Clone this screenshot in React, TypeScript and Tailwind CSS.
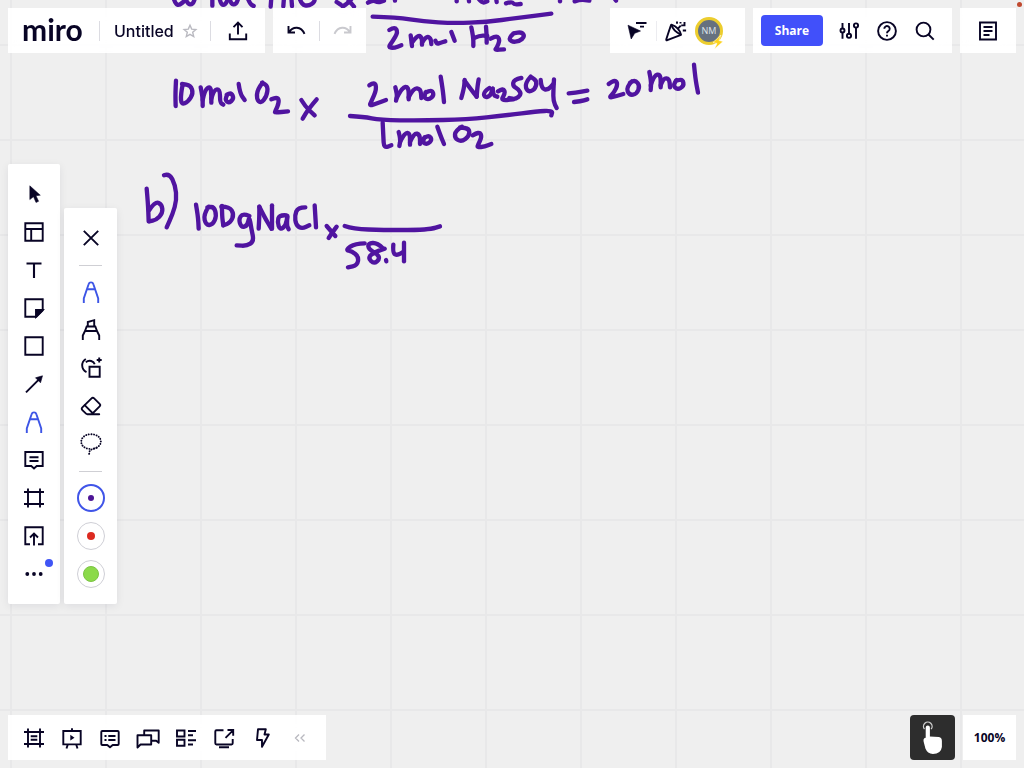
import React from 'react';
import { Eraser } from 'lucide-react';

const INK = '#5014a0';

interface InkGroup {
  x: number;
  y: number;
  strokes: number[][];
}

// Pen strokes as flat x,y lists, in board units (3 units = 1 px at 100% zoom)
const INK_GROUPS: InkGroup[] = [
  {
    x: 480,
    y: 0,
    strokes: [
      // first row, cut by the top edge
      [40, -8, 46, 12, 58, 16, 74, 2],
      [74, -10, 82, 12, 98, 14, 106, -8],
      [157, -8, 157, 17],
      [178, -8, 182, 14, 196, 15, 206, -8],
      [208, -8, 212, 12, 228, 14, 236, -8],
      [262, -8, 270, 12, 281, 18],
      [334, -8, 332, 20],
      [372, -8, 370, 19],
      [394, -8, 396, 18],
      [418, -8, 424, 14, 446, 18, 464, 6, 464, -8],
      [530, 6, 542, 14],
      [548, 20, 566, 8, 578, -8],
      [566, 2, 574, 10, 582, 20],
      // 10 mol O2 x
      [48, 242, 46, 280, 47, 318],
      [68, 254, 62, 284, 64, 314, 84, 306, 100, 280, 92, 256, 66, 252],
      [122, 262, 128, 290, 128, 318],
      [128, 300, 134, 270, 152, 258, 154, 288, 154, 308],
      [154, 296, 162, 268, 180, 268, 180, 308, 190, 314],
      [202, 284, 194, 298, 206, 310, 222, 296, 214, 278, 200, 284],
      [236, 252, 240, 280, 254, 300],
      [308, 248, 292, 268, 290, 298, 302, 310, 320, 290, 324, 258, 306, 248],
      [334, 298, 352, 290, 358, 306, 346, 334, 344, 338, 384, 334],
      [424, 300, 436, 320, 464, 346],
      [470, 298, 446, 326, 428, 356],
    ],
  },
  {
    x: 1020,
    y: 0,
    strokes: [
      // first row, cut by the top edge
      [84, 8, 98, 0, 114, 8, 132, 2],
      [164, -8, 165, 2],
      [350, -8, 350, 4],
      [386, -8, 387, 4],
      [414, -6, 426, 10, 442, 4],
      [468, -8, 470, 6],
      [498, 10, 516, 4, 522, 14, 542, 12],
      [660, -8, 660, 4],
      [704, 4, 722, -2, 748, 2],
      [824, -4, 828, 2],
      // bar and 2 mol H2O
      [98, 50, 170, 52, 250, 64, 340, 70, 440, 66, 530, 54, 634, 41],
      [148, 90, 164, 80, 174, 96, 158, 124, 144, 142, 162, 144, 184, 136],
      [212, 106, 216, 138],
      [216, 128, 232, 104, 246, 112, 246, 134],
      [246, 128, 258, 108, 272, 114, 274, 132],
      [286, 122, 290, 132, 302, 128, 316, 124],
      [334, 96, 344, 122],
      [394, 82, 400, 110, 400, 138],
      [438, 80, 440, 104, 440, 128],
      [402, 114, 420, 106, 442, 108],
      [452, 116, 470, 106, 480, 120, 470, 144, 464, 150, 492, 148],
      [522, 100, 506, 112, 514, 126, 538, 124, 554, 110, 546, 96, 520, 100],
      // 2 mol Na2SO4
      [88, 256, 104, 244, 110, 268, 94, 304, 88, 318, 110, 310, 138, 300],
      [166, 262, 172, 284, 168, 302],
      [170, 294, 186, 262, 206, 260, 206, 298],
      [206, 292, 220, 264, 242, 266, 244, 294],
      [258, 276, 250, 292, 266, 300, 282, 286, 276, 270, 256, 278],
      [302, 230, 308, 266, 312, 306],
      [364, 294, 372, 266, 374, 240],
      [374, 242, 390, 264, 410, 290],
      [410, 290, 412, 262, 416, 238],
      [448, 264, 432, 274, 432, 292, 450, 290, 458, 266],
      [458, 266, 460, 286, 472, 290],
      [474, 274, 490, 264, 496, 280, 482, 302, 520, 298],
      [544, 234, 522, 238, 518, 258, 536, 268, 544, 284, 526, 298, 508, 294],
      [572, 230, 554, 250, 562, 276, 584, 270, 592, 244, 572, 230],
      [602, 240, 604, 266, 624, 270, 640, 252],
      [642, 238, 640, 270, 640, 304, 650, 324],
      // bar and 1 mol O2
      [30, 348, 70, 350, 120, 360, 240, 362, 380, 358, 500, 346, 590, 334, 638, 332, 634, 346],
      [128, 368, 130, 410, 132, 444, 154, 436],
      [176, 396, 182, 418, 178, 438],
      [180, 426, 194, 398, 210, 400, 210, 434],
      [210, 426, 222, 398, 240, 404, 240, 432],
      [254, 412, 246, 426, 262, 434, 276, 420, 268, 406, 252, 414],
      [292, 380, 302, 408, 312, 432],
      [366, 380, 346, 392, 344, 414, 364, 426, 388, 408, 388, 386, 360, 382],
      [398, 406, 418, 394, 426, 410, 414, 434, 412, 442, 434, 440, 454, 432],
      // = 20 mol
      [686, 280, 708, 278, 742, 272],
      [702, 306, 722, 304, 742, 298],
      [806, 252, 824, 238, 834, 252, 822, 278, 806, 294, 830, 288, 850, 282],
      [876, 244, 858, 262, 868, 286, 890, 282, 900, 258, 886, 240, 870, 248],
      [928, 216, 934, 244, 932, 270],
      [932, 256, 942, 226, 962, 222, 962, 262],
      [962, 256, 970, 234, 988, 236, 990, 262],
      [1010, 240, 998, 254, 1012, 270, 1032, 258, 1028, 238, 1008, 242],
      [1062, 194, 1066, 236, 1074, 278],
    ],
  },
  {
    x: 390,
    y: 480,
    strokes: [
      // b)
      [50, 86, 54, 130, 56, 184],
      [58, 150, 76, 124, 96, 134, 98, 160, 78, 180, 58, 184],
      [102, 46, 118, 40, 136, 76, 140, 120, 128, 162, 110, 202],
      // 100 g NaCl
      [198, 134, 204, 168, 206, 206],
      [236, 140, 220, 164, 228, 196, 248, 194, 260, 168, 252, 140, 232, 142],
      [276, 138, 276, 168, 280, 196],
      [274, 140, 298, 140, 312, 162, 302, 188, 280, 196],
      [358, 168, 338, 160, 326, 178, 334, 202, 352, 198, 358, 168, 364, 206, 372, 244, 350, 258, 320, 256],
      [386, 206, 388, 174, 388, 140],
      [388, 140, 404, 172, 424, 206],
      [426, 206, 426, 170, 426, 136],
      [470, 166, 448, 164, 442, 186, 450, 210, 468, 196, 472, 168],
      [472, 170, 470, 196, 476, 208],
      [526, 142, 504, 142, 494, 166, 498, 196, 516, 206, 538, 196],
      [554, 136, 556, 168, 558, 202],
      // x, bar, 58.4
      [590, 198, 602, 212, 616, 228],
      [620, 200, 608, 216, 596, 234],
      [644, 198, 670, 207, 760, 210, 860, 210, 905, 207, 930, 199],
      [704, 250, 676, 250, 646, 270, 666, 274, 686, 290, 682, 316, 654, 322],
      [760, 266, 742, 248, 714, 250, 716, 268, 740, 280, 750, 296, 732, 312, 714, 294, 730, 278, 764, 266],
      [768, 300, 769, 304],
      [790, 254, 788, 280, 802, 286, 820, 276],
      [822, 248, 822, 276, 822, 304],
    ],
  },
];

// Smooths a stroke by running quadratic curves through the segment midpoints
function strokePath(pts: number[]) {
  let d = `M${pts[0]} ${pts[1]}`;
  for (let i = 2; i < pts.length - 2; i += 2) {
    const mx = (pts[i] + pts[i + 2]) / 2;
    const my = (pts[i + 1] + pts[i + 3]) / 2;
    d += `Q${pts[i]} ${pts[i + 1]} ${mx} ${my}`;
  }
  return `${d}L${pts[pts.length - 2]} ${pts[pts.length - 1]}`;
}

function Board() {
  return (
    <div className="absolute inset-0 overflow-hidden" role="img" aria-label="Whiteboard canvas">
      <svg className="absolute inset-0 w-full h-full">
        <defs>
          <pattern id="grid" x="10" y="44" width="95" height="95" patternUnits="userSpaceOnUse">
            <path d="M0 1H95M1 0V95" stroke="#e8e8e9" strokeWidth="2" fill="none" />
          </pattern>
        </defs>
        <rect width="100%" height="100%" fill="url(#grid)" />
      </svg>
      <svg className="absolute top-0 left-0 max-w-none" width="1024" height="768" viewBox="0 0 3072 2304">
        {INK_GROUPS.map((group, i) => (
          <g
            key={i}
            transform={`translate(${group.x} ${group.y})`}
            fill="none"
            stroke={INK}
            strokeWidth="13"
            strokeLinecap="round"
            strokeLinejoin="round"
          >
            {group.strokes.map((pts, j) => (
              <path key={j} d={strokePath(pts)} />
            ))}
          </g>
        ))}
      </svg>
    </div>
  );
}

interface IconProps {
  children: React.ReactNode;
  width?: string;
}

function Icon({ children, width = '1.9' }: IconProps) {
  return (
    <svg
      className="w-6 h-6 shrink-0 overflow-visible"
      viewBox="0 0 24 24"
      fill="none"
      stroke="currentColor"
      strokeWidth={width}
      aria-hidden="true"
    >
      {children}
    </svg>
  );
}

interface ToolProps {
  label: string;
  children: React.ReactNode;
  className?: string;
}

function Tool({ label, children, className = '' }: ToolProps) {
  return (
    <button
      type="button"
      aria-label={label}
      className={`relative flex items-center justify-center w-[38px] h-[38px] shrink-0 cursor-pointer ${className}`}
    >
      {children}
    </button>
  );
}

function PenIcon() {
  return (
    <Icon>
      <path d="M4.800 23v-4.500L9.600 4.200a2.500 2.500 0 0 1 4.800 0L19.200 18.500V23M8.400 9.200h7.200" />
    </Icon>
  );
}

function Divider() {
  return <span className="w-px h-5 shrink-0 bg-[#dcdce2]" />;
}

function TopBar() {
  return (
    <header className="relative flex gap-2 p-2">
      <div className="flex items-center h-[45px] pl-[14px] pr-2 bg-white/95 backdrop-blur-sm">
        <a href="#" className="w-[77px] text-[30px] leading-8 font-bold font-['Lato',sans-serif] pb-1">
          miro
        </a>
        <Divider />
        <button type="button" className="ml-[14px] text-base font-medium font-['Inter',sans-serif] cursor-pointer">
          Untitled
        </button>
        <button type="button" aria-label="Add to favourites" className="ml-2 mr-3 text-[#b9b9c0] cursor-pointer">
          <svg className="w-4 h-4" viewBox="0 0 16 16" fill="none" stroke="currentColor" strokeWidth="1.4">
            <path d="M8 2.200l1.700 3.900 4.200.400-3.200 2.800 1 4.200L8 11.300l-3.700 2.200 1-4.200-3.200-2.800 4.200-.400z" />
          </svg>
        </button>
        <Divider />
        <Tool label="Export" className="ml-2">
          <Icon>
            <path d="M3.800 14.500v5.700h16.400v-5.700M12 15.500V4M7.500 8.200 12 3.700l4.500 4.500" />
          </Icon>
        </Tool>
      </div>

      <div className="flex items-center h-[45px] px-1 bg-white/95 backdrop-blur-sm">
        <Tool label="Undo">
          <Icon>
            <path d="M4.500 7v6.500H11M5 13.300c4-6.300 12-6.300 15.500 1.500" />
          </Icon>
        </Tool>
        <span className="px-1">
          <span className="block w-px h-5 bg-[#dcdce2]" />
        </span>
        <Tool label="Redo" className="text-[#c9c9ce]">
          <Icon>
            <path d="M19.500 7v6.500H13M19 13.300C15 7 7 7 3.500 14.800" />
          </Icon>
        </Tool>
      </div>

      <div className="flex items-center h-[45px] w-[135px] ml-auto pl-2 bg-white/95 backdrop-blur-sm">
        <Tool label="Hide cursors">
          <Icon>
            <path d="M3 6.200 15.500 12l-5.800 2.300L6.200 20z" fill="currentColor" strokeWidth="0.6" />
            <path d="M11 4h10.500M15 7.600h4" />
          </Icon>
        </Tool>
        <span className="w-px h-5 bg-[#ececf0]" />
        <Tool label="Reactions">
          <Icon>
            <path d="M7.300 5.600Q6.200 8 2.300 20.300q-.3 1.400 1 .900L17 15.800Q15.500 8.500 7.300 5.600z" strokeLinejoin="round" />
            <path d="M7.300 5.600Q9 12 17 15.800M14 9.600l2.700-2.900M17.200 6.400h3.300V3M13 2.500v2.300M18.800 11.500h3.300M16.500 3v1.500" />
          </Icon>
        </Tool>
        <button
          type="button"
          aria-label="Profile"
          className="relative flex items-center justify-center w-7 h-7 border-3 border-[#eccd2e] rounded-full bg-[#66717f] text-[#dfe5ea] text-[9px] font-['Open_Sans',sans-serif] cursor-pointer"
        >
          NM
          <svg className="absolute -right-1 -bottom-2 w-3 h-4" viewBox="0 0 12 16">
            <path d="M9 1 1 8.500l4 1L2.500 15 11 7.500 7 6.500z" fill="#fcd21f" stroke="#fff" strokeWidth="0.5" />
          </svg>
        </button>
      </div>

      <div className="flex items-center h-[45px] px-2 bg-white/95 backdrop-blur-sm">
        <button
          type="button"
          className="w-[62px] h-[31px] mr-[7px] rounded bg-[#4150fa] text-white text-[12px] font-bold font-['Open_Sans',sans-serif] cursor-pointer"
        >
          Share
        </button>
        <Tool label="Settings">
          <Icon>
            <path d="M5.500 4v5.500M5.500 13.500v6.200M12 4v10.700M19 9v10.700" />
            <circle cx="5.500" cy="11.500" r="2" />
            <circle cx="12" cy="16.800" r="2.100" />
            <circle cx="19" cy="6.500" r="2.100" />
          </Icon>
        </Tool>
        <Tool label="Help">
          <Icon>
            <circle cx="12" cy="12" r="8.900" />
            <path d="M9.300 9.800a2.700 2.700 0 1 1 4.200 2.200c-1 .7-1.500 1-1.500 2.200M12 15.700v1.900" />
          </Icon>
        </Tool>
        <Tool label="Search">
          <Icon>
            <circle cx="10.500" cy="10.500" r="6.900" />
            <path d="m15.500 15.500 5.200 5.200" />
          </Icon>
        </Tool>
      </div>

      <div className="flex items-center h-[45px] px-[9px] bg-white/95 backdrop-blur-sm">
        <Tool label="Notes">
          <Icon>
            <path d="M4 3.500h16v17H4zM7.500 8h9M7.500 12h9M7.500 16h6" />
          </Icon>
        </Tool>
      </div>
      <span className="absolute top-0.5 right-0.5 w-[5px] h-[5px] rounded-full bg-[#c0492f]" />
    </header>
  );
}

const PEN_COLORS = [
  { name: 'Purple pen', ring: 'border-2 border-[#4055e8]', dot: 'w-1.5 h-1.5 bg-[#4d1596]' },
  { name: 'Red pen', ring: 'border border-[#cfcfd6]', dot: 'w-2 h-2 bg-[#dc2a20]' },
  { name: 'Green pen', ring: 'border border-[#cfcfd6]', dot: 'w-4 h-4 border border-[#7cc444] bg-[#8bda4a]' },
];

function SideBars() {
  return (
    <main className="relative flex flex-1 items-center px-2">
      <div className="flex items-end gap-1">
        <nav
          aria-label="Tools"
          className="flex flex-col items-center w-[52px] py-[11px] bg-white/98 rounded-xs shadow-[0_2px_8px_rgba(5,0,56,0.08)]"
        >
          <Tool label="Select">
            <Icon>
              <path
                d="M7.800 3.800 18.300 13.200l-4.300.500 2.600 5.600-2.600 1.200-2.500-5.700-3.700 2.800z"
                fill="currentColor"
                strokeWidth="0.5"
              />
            </Icon>
          </Tool>
          <Tool label="Templates">
            <Icon>
              <path d="M3.300 3.300h17.400v17.400H3.300zM3.300 9h17.400M9.200 9v11.700" />
            </Icon>
          </Tool>
          <Tool label="Text">
            <Icon width="2.100">
              <path d="M4.500 5.500h15M12 5.500V20" />
            </Icon>
          </Tool>
          <Tool label="Sticky note">
            <Icon>
              <path d="M3.300 3.300h17.400v11L14.300 20.700h-11z" />
              <path d="M20.700 14h-6.700v6.700z" fill="currentColor" />
            </Icon>
          </Tool>
          <Tool label="Shapes">
            <Icon>
              <path d="M3.300 3.300h17.400v17.400H3.300z" />
            </Icon>
          </Tool>
          <Tool label="Connection line">
            <Icon>
              <path d="M4 20.300 17.500 6.800" />
              <path d="m20.500 3.800-2 7L13.500 5.800z" fill="currentColor" strokeWidth="0.6" />
            </Icon>
          </Tool>
          <Tool label="Pen" className="text-[#3d55e6]">
            <PenIcon />
          </Tool>
          <Tool label="Comment">
            <Icon>
              <path d="M3.300 4h17.400v14h-6l-2.700 2.400L9.300 18h-6zM7.500 9.200h9M7.500 13h9" />
            </Icon>
          </Tool>
          <Tool label="Frame">
            <Icon>
              <path d="M6 2.500v19M18 2.500v19M2 6h20M2 18h20" />
            </Icon>
          </Tool>
          <Tool label="Upload">
            <Icon>
              <path d="M8 20.200H3.300V3.300h17.400v16.900H16M12 21.500V10M8 13.500l4-4 4 4" />
            </Icon>
          </Tool>
          <Tool label="More">
            <Icon>
              <g fill="currentColor" stroke="none">
                <circle cx="5.300" cy="12" r="1.900" />
                <circle cx="12" cy="12" r="1.900" />
                <circle cx="18.700" cy="12" r="1.900" />
              </g>
            </Icon>
            <span className="absolute top-1 right-0 w-2 h-2 rounded-full bg-[#4055f5]" />
          </Tool>
        </nav>

        <div className="flex flex-col items-center w-[53px] py-[11px] bg-white/98 rounded-xs shadow-[0_2px_8px_rgba(5,0,56,0.08)]">
          <Tool label="Close">
            <Icon>
              <path d="m4.800 4.800 14.400 14.400M19.200 4.800 4.800 19.200" />
            </Icon>
          </Tool>
          <span className="flex items-center h-4">
            <span className="w-[23px] h-px bg-[#cfcfd4]" />
          </span>
          <Tool label="Pen" className="text-[#3d55e6]">
            <PenIcon />
          </Tool>
          <Tool label="Highlighter">
            <Icon>
              <path d="M3.800 22v-4.500L6 13h12l2.200 4.500V22M6 13l1.700-4.500h8.600L18 13M8.800 8.500V4l6.400-1.800v6.300" />
            </Icon>
          </Tool>
          <Tool label="Smart drawing">
            <Icon>
              <path d="M10.500 10.800h10.200v9.900H10.500z" />
              <path d="M6.800 3A7.500 7.500 0 0 0 7.500 16.200M6.800 6.200c3.500-2.800 8-1 8.900 2M20.200 1.500v5M17.700 4h5" />
            </Icon>
          </Tool>
          <Tool label="Eraser">
            <Eraser className="w-[22px] h-[22px]" strokeWidth={2} aria-hidden="true" />
          </Tool>
          <Tool label="Lasso">
            <Icon>
              <g strokeDasharray="0.1 2.500" strokeLinecap="round">
                <path d="M10.500 16.900C-1 16-.5 2.500 12 2.200 24.500 2.500 25 15 14 16.800" />
                <path d="M17.500 15.800c-4 1.200-7 2-7 4.200 0 1.200-.3 1.800-1 2.800" />
              </g>
            </Icon>
          </Tool>
          <span className="flex items-center h-4">
            <span className="w-[23px] h-px bg-[#cfcfd4]" />
          </span>
          {PEN_COLORS.map((color, i) => (
            <label key={color.name} className="flex items-center justify-center w-[38px] h-[38px] cursor-pointer">
              <input type="radio" name="pen-color" defaultChecked={i === 0} aria-label={color.name} className="sr-only" />
              <span className={`flex items-center justify-center w-7 h-7 rounded-full ${color.ring}`}>
                <span className={`rounded-full ${color.dot}`} />
              </span>
            </label>
          ))}
        </div>
      </div>
    </main>
  );
}

function BottomBar() {
  return (
    <footer className="relative flex gap-2 p-2">
      <div className="flex items-center h-[45px] px-[7px] bg-white/95 backdrop-blur-sm">
        <Tool label="Frames">
          <Icon>
            <path d="M6 2.500v19M18 2.500v19M2 6h20M2 18h20M8.700 10.200h6.600M8.700 13.800h6.600" />
          </Icon>
        </Tool>
        <Tool label="Presentation">
          <Icon>
            <path d="M3.300 5h17.400v13.400H3.300zM12 2.300V5M7.800 18.500 6.500 22.500M16.200 18.500l1.300 4" />
            <path d="m10.300 8.800 4.200 2.900-4.200 2.900z" fill="currentColor" stroke="none" />
          </Icon>
        </Tool>
        <Tool label="Comments">
          <Icon>
            <path
              d="M4.300 5h15.400q1 0 1 1v12q0 1-1 1h-5l-2.700 2.200L9.300 19h-5q-1 0-1-1V6q0-1 1-1z"
              strokeLinejoin="round"
            />
            <path d="M6.500 10h2M10.300 10h7.200M6.500 14h2M10.300 14h7.200" />
          </Icon>
        </Tool>
        <Tool label="Chat">
          <Icon>
            <path d="M8.200 9V4.500h14.500v12.300l-2.500-2H16" strokeLinejoin="round" />
            <path d="M1.500 21.500V9.300h13.700v9.200H4.500z" strokeLinejoin="round" />
          </Icon>
        </Tool>
        <Tool label="Cards">
          <Icon>
            <path d="M3 4.500h7.500v6H3zM3 13.700h7.500v6H3zM14 5h8M14 9.300h5M14 14.200h8M14 18.500h5" />
          </Icon>
        </Tool>
        <Tool label="Screen sharing">
          <Icon>
            <path d="M11.500 4.300h-7q-1.200 0-1.200 1.200v11.800q0 1.200 1.200 1.200h15q1.200 0 1.200-1.200V13M13.500 11.800 21 4.300M15.500 4h5.700v5.700M7 21.300h10" />
          </Icon>
        </Tool>
        <Tool label="Activities">
          <Icon>
            <path d="M8 3.300h7.800l-1.300 5.200h4.300L12 20.800V14H7z" strokeLinejoin="round" />
          </Icon>
        </Tool>
        <Tool label="Collapse" className="text-[#b8b8bf]">
          <Icon width="1.300">
            <path d="M11 8.500 7.500 12l3.500 3.500M16.500 8.500 13 12l3.500 3.500" />
          </Icon>
        </Tool>
      </div>

      <button
        type="button"
        aria-label="Touch mode"
        className="flex items-center justify-center w-[45px] h-[45px] ml-auto rounded bg-[#2d2d2d] cursor-pointer"
      >
        <svg className="w-[45px] h-[45px]" viewBox="0 0 45 45" aria-hidden="true">
          <path
            d="M15.700 12.500a2.100 2.100 0 0 1 4.200 0V21.500l9 .5q3 .5 3 4v6q-1 7-9 7-5.500-.5-7.500-5.500l-1.800-7q-.5-2 .5-3t1.600-.5z"
            fill="#fff"
          />
          <path d="M14.500 14.200a4.300 4.300 0 1 1 6.600 0" fill="none" stroke="#cfcfcf" strokeWidth="1.300" />
        </svg>
      </button>
      <button
        type="button"
        className="w-[53px] h-[45px] bg-white/95 text-[12px] font-bold font-['Open_Sans',sans-serif] cursor-pointer"
      >
        100%
      </button>
    </footer>
  );
}

export default function App() {
  return (
    <div className="relative flex flex-col min-h-screen overflow-hidden bg-[#efefef] text-[#080425]">
      <Board />
      <TopBar />
      <SideBars />
      <BottomBar />
    </div>
  );
}
